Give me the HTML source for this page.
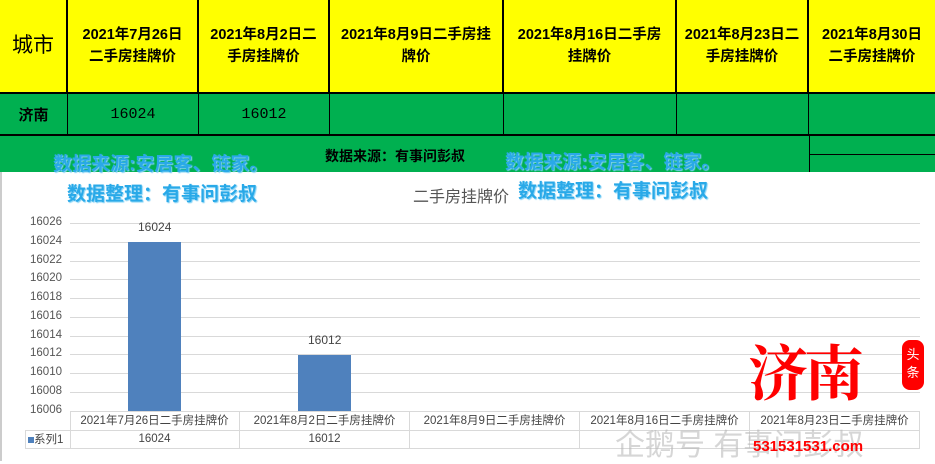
<!DOCTYPE html>
<html><head><meta charset="utf-8"><style>
*{margin:0;padding:0;box-sizing:border-box}
body{width:935px;height:461px;overflow:hidden;background:#fff;position:relative;font-family:"Liberation Sans","Noto Sans CJK SC",sans-serif}
.a{position:absolute}
.h{position:absolute;top:0;height:92px;background:#ffff00;border-right:2px solid #000;display:flex;align-items:center;justify-content:center;text-align:center;font-weight:bold;font-size:14.5px;line-height:22px;color:#000}
.g{position:absolute;top:92px;height:44px;background:#00b050;border-right:1px solid #000;border-top:2px solid #000;border-bottom:2px solid #000;display:flex;align-items:center;justify-content:center;font-size:15px;font-weight:bold;font-family:"Liberation Mono","Noto Sans CJK SC",monospace}
.gl{position:absolute;left:70px;width:850px;height:1px;background:#d9d9d9}
.yl{position:absolute;left:20px;width:42px;text-align:right;font-size:11.5px;color:#555}
.wm{position:absolute;color:#29a9e8;font-weight:bold;font-size:19px;font-family:"Liberation Sans","Noto Sans CJK SC",sans-serif;text-shadow:1px 1px 1px #7fd0f5}
.tc{position:absolute;border-right:1px solid #d9d9d9;font-size:11.5px;color:#444;text-align:center;height:20px;line-height:20px;white-space:nowrap}
</style></head><body>
<div class="h" style="left:0;width:68px;font-size:21px;font-weight:normal">城市</div>
<div class="h" style="left:68px;width:131px">2021年7月26日<br>二手房挂牌价</div>
<div class="h" style="left:199px;width:131px">2021年8月2日二<br>手房挂牌价</div>
<div class="h" style="left:330px;width:174px">2021年8月9日二手房挂<br>牌价</div>
<div class="h" style="left:504px;width:173px">2021年8月16日二手房<br>挂牌价</div>
<div class="h" style="left:677px;width:132px">2021年8月23日二<br>手房挂牌价</div>
<div class="h" style="left:809px;width:126px;border-right:none">2021年8月30日<br>二手房挂牌价</div>
<div class="g" style="left:0;width:68px;font-family:'Liberation Sans','Noto Sans CJK SC',sans-serif">济南</div>
<div class="g" style="left:68px;width:131px;font-weight:normal">16024</div>
<div class="g" style="left:199px;width:131px;font-weight:normal">16012</div>
<div class="g" style="left:330px;width:174px"></div>
<div class="g" style="left:504px;width:173px"></div>
<div class="g" style="left:677px;width:132px"></div>
<div class="g" style="left:809px;width:126px;border-right:none"></div>
<div class="a" style="left:0;top:136px;width:935px;height:36px;background:#00b050"></div>
<div class="a" style="left:809px;top:136px;width:1px;height:36px;background:#000"></div>
<div class="a" style="left:809px;top:154px;width:126px;height:1px;background:#000"></div>
<div class="a" style="left:325px;top:146px;font-size:14px;font-weight:bold">数据来源：有事问彭叔</div>
<div class="a" style="left:0;top:172px;width:2px;height:289px;background:#ccc"></div>
<div class="wm" style="left:53px;top:149px">数据来源:安居客、链家。</div>
<div class="wm" style="left:505px;top:147px">数据来源:安居客、链家。</div>
<div class="wm" style="left:67px;top:179px">数据整理：有事问彭叔</div>
<div class="wm" style="left:518px;top:176px">数据整理：有事问彭叔</div>
<div class="a" style="left:413px;top:183px;font-size:16px;color:#555">二手房挂牌价</div>
<div class="gl" style="top:223px"></div><div class="gl" style="top:242px"></div><div class="gl" style="top:261px"></div><div class="gl" style="top:279px"></div><div class="gl" style="top:298px"></div><div class="gl" style="top:317px"></div><div class="gl" style="top:336px"></div><div class="gl" style="top:354px"></div><div class="gl" style="top:373px"></div><div class="gl" style="top:392px"></div>
<div class="yl" style="top:216px">16026</div><div class="yl" style="top:235px">16024</div><div class="yl" style="top:254px">16022</div><div class="yl" style="top:272px">16020</div><div class="yl" style="top:291px">16018</div><div class="yl" style="top:310px">16016</div><div class="yl" style="top:329px">16014</div><div class="yl" style="top:347px">16012</div><div class="yl" style="top:366px">16010</div><div class="yl" style="top:385px">16008</div><div class="yl" style="top:404px">16006</div>
<div class="a" style="left:128px;top:242px;width:53px;height:169px;background:#4f81bd"></div>
<div class="a" style="left:298px;top:355px;width:53px;height:56px;background:#4f81bd"></div>
<div class="a" style="left:138px;top:220px;font-size:12px;color:#444">16024</div>
<div class="a" style="left:308px;top:333px;font-size:12px;color:#444">16012</div>
<div class="a" style="left:70px;top:411px;width:850px;height:1px;background:#d9d9d9"></div>
<div class="a" style="left:25px;top:430px;width:895px;height:1px;background:#d9d9d9"></div>
<div class="a" style="left:25px;top:448px;width:895px;height:1px;background:#d9d9d9"></div>
<div class="a" style="left:25px;top:430px;width:1px;height:18px;background:#d9d9d9"></div>
<div class="a" style="left:70px;top:411px;width:1px;height:37px;background:#d9d9d9"></div>
<div class="tc" style="left:70px;top:411px;width:170px">2021年7月26日二手房挂牌价</div>
<div class="tc" style="left:240px;top:411px;width:170px">2021年8月2日二手房挂牌价</div>
<div class="tc" style="left:410px;top:411px;width:170px">2021年8月9日二手房挂牌价</div>
<div class="tc" style="left:580px;top:411px;width:170px">2021年8月16日二手房挂牌价</div>
<div class="tc" style="left:750px;top:411px;width:170px">2021年8月23日二手房挂牌价</div>
<div class="tc" style="left:70px;top:429px;width:170px">16024</div>
<div class="tc" style="left:240px;top:429px;width:170px">16012</div>
<div class="tc" style="left:410px;top:429px;width:170px"></div>
<div class="tc" style="left:580px;top:429px;width:170px"></div>
<div class="tc" style="left:750px;top:429px;width:170px"></div>
<div class="a" style="left:28px;top:431px;font-size:11.5px;color:#444"><span style="display:inline-block;width:6px;height:6px;background:#4f81bd"></span>系列1</div>
<div class="a" style="left:615px;top:420px;font-size:30px;color:rgba(180,180,180,.55)">企鹅号 有事问彭叔</div>
<div class="a" style="left:748px;top:340px;font-size:60px;color:#f00;font-weight:bold;font-family:'Noto Serif CJK SC',serif;line-height:60px;letter-spacing:-4px">济南</div>
<div class="a" style="left:902px;top:340px;width:22px;height:50px;background:#f00;border-radius:8px;color:#fff;font-size:13px;line-height:18px;text-align:center;padding-top:6px">头<br>条</div>
<div class="a" style="left:753px;top:438px;font-size:15px;color:#f00;font-weight:bold">531531531.com</div>
</body></html>
